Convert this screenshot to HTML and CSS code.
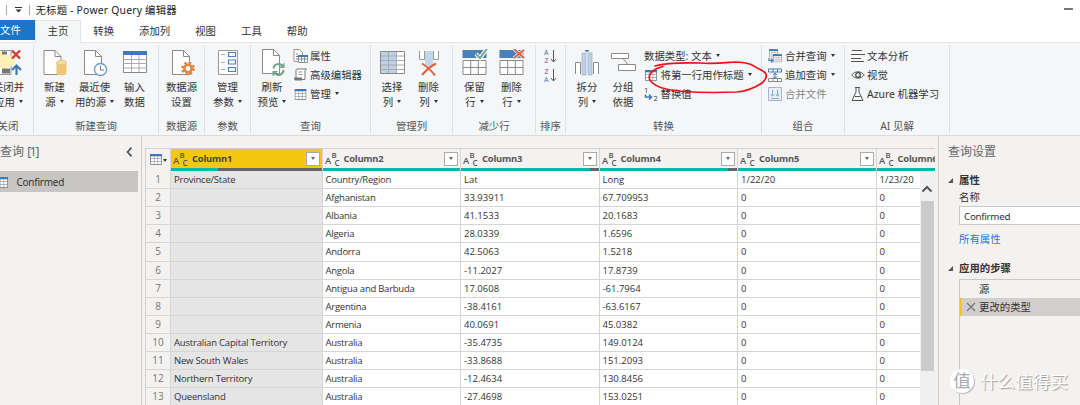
FILE: index.html
```html
<!DOCTYPE html>
<html lang="zh-CN">
<head>
    <meta charset="UTF-8">
    <meta name="viewport" content="width=device-width, initial-scale=1.0">
    <title>无标题 - Power Query 编辑器</title>
    <link rel="stylesheet" href="styles.css">
</head>
<body>
    <svg class="defs" width="0" height="0">
        <symbol id="abc" viewBox="0 0 16 16">
            <text x="0" y="12.6" font-size="9.4">A</text>
            <text x="6.4" y="7.4" font-size="7.8">B</text>
            <text x="9.4" y="15" font-size="8">C</text>
        </symbol>
        <symbol id="page" viewBox="0 0 24 28">
            <path d="M1.5 1.5h11l6 6v18h-17z" fill="#fff" stroke="#8a8a8a"/>
            <path d="M12.5 1.5v6h6" fill="none" stroke="#8a8a8a"/>
        </symbol>
        <symbol id="table" viewBox="0 0 12 12">
            <path d="M.5 1.5h11v10H.5z" fill="#fff" stroke="#777" stroke-width=".8"/>
            <path d="M.5 5.5h11M.5 8.5h11M4.2 3v8M7.8 3v8" stroke="#999" stroke-width=".7"/>
            <path d="M0 1h12v2.3H0z" fill="#3f79b5"/>
        </symbol>
        <symbol id="rows" viewBox="0 0 26 28">
            <path d="M.5 1h24v8H.5z" fill="#4a80b8"/>
            <path d="M1 11.5h23v14H1zM1 18.5h23M8.7 11.5v14M16.3 11.5v14" fill="#fff" stroke="#8a8a8a"/>
        </symbol>
    </svg>

    <div class="title-bar">
        <span class="bar"></span>
        <svg width="7" height="6"><path d="M0 .5h7" stroke="#333"/><path d="M.5 2.5h6l-3 3z" fill="#333"/></svg>
        <span class="bar"></span>
        <span class="title">无标题 - Power Query 编辑器</span>
        <span class="minimize"></span>
    </div>

    <div class="tabs">
        <div class="tab file">文件</div>
        <div class="tab active">主页</div>
        <div class="tab">转换</div>
        <div class="tab">添加列</div>
        <div class="tab">视图</div>
        <div class="tab">工具</div>
        <div class="tab">帮助</div>
    </div>

    <div class="ribbon">
        <div class="group g-close">
            <div class="tools">
                <div class="btn w51">
                    <svg width="28" height="28" viewBox="0 0 28 28">
                        <path d="M1 1.5h15v24H1z" fill="#fff" stroke="#999"/>
                        <path d="M3 2h7v17H3zM8 6l12 1v8l-10 5z" fill="#fff0b8"/>
                        <path d="M7 2.500h5v3H7zM7 19.500h8v5H7z" fill="#777"/>
                        <path d="M17 1.500l8 8M25 1.500l-8 8" stroke="#d13a32" stroke-width="2.400"/>
                        <path d="M21.500 26V17M17 21l4.500-4.500L26 21" fill="none" stroke="#3f79b5" stroke-width="2.200"/>
                    </svg>
                    <span>关闭并</span><span>应用<i class="caret"></i></span>
                </div>
            </div>
            <div class="caption">关闭</div>
        </div>

        <div class="group g-new">
            <div class="tools">
                <div class="btn w41">
                    <svg width="24" height="28" viewBox="0 0 24 28">
                        <use href="#page" x="-.5" width="24" height="28"/>
                        <path d="M13.500 14v10.500c0 1.300 2.200 2 5 2s5-.7 5-2V14z" fill="#edc77b"/>
                        <ellipse cx="18.500" cy="13.500" rx="5" ry="2" fill="#f6dfae" stroke="#e9bd65" stroke-width=".8"/>
                    </svg>
                    <span>新建</span><span>源<i class="caret"></i></span>
                </div>
                <div class="btn w39">
                    <svg width="24" height="28" viewBox="0 0 24 28">
                        <use href="#page" width="24" height="28"/>
                        <circle cx="17.500" cy="20.500" r="6" fill="#fff" stroke="#6f9bc8" stroke-width="1.300"/>
                        <path d="M17.500 16.500v4.500h3.500" fill="none" stroke="#5a7fa8"/>
                    </svg>
                    <span>最近使</span><span>用的源<i class="caret"></i></span>
                </div>
                <div class="btn w41">
                    <svg width="24" height="28" viewBox="0 0 24 28">
                        <path d="M.5 3.500h23v20H.5z" fill="#fff" stroke="#8a8a8a"/>
                        <path d="M0 10.500h24M0 14.500h24M0 19h24M8.500 6v17M16 6v17" stroke="#aaa"/>
                        <path d="M0 2h24v4H0z" fill="#3f79b5"/>
                    </svg>
                    <span>输入</span><span>数据</span>
                </div>
            </div>
            <div class="caption">新建查询</div>
        </div>

        <div class="group g-source">
            <div class="tools">
                <div class="btn w45">
                    <svg width="26" height="28" viewBox="0 0 26 28">
                        <use href="#page" width="24" height="28" x="2"/>
                        <circle cx="19" cy="19.500" r="5.600" fill="none" stroke="#e0843f" stroke-width="2.600" stroke-dasharray="2.400 1.998"/>
                        <circle cx="19" cy="19.500" r="3.700" fill="#fff" stroke="#e0843f" stroke-width="2.600"/>
                    </svg>
                    <span>数据源</span><span>设置</span>
                </div>
            </div>
            <div class="caption">数据源</div>
        </div>

        <div class="group g-param">
            <div class="tools">
                <div class="btn w45">
                    <svg width="22" height="28" viewBox="0 0 22 28">
                        <path d="M1.500 1.500h19v24h-19z" fill="#fff" stroke="#999"/>
                        <path d="M4 5.500h4M4 13.500h4M4 20.500h4" stroke="#aaa"/>
                        <path d="M11.500 3.500h7v4h-7zM11.500 11h7v4h-7zM11.500 18.500h7v4h-7z" fill="#fff" stroke="#4a80b8" stroke-width="1.200"/>
                    </svg>
                    <span>管理</span><span>参数<i class="caret"></i></span>
                </div>
            </div>
            <div class="caption">参数</div>
        </div>

        <div class="group g-query">
            <div class="tools">
                <div class="btn w42">
                    <svg width="26" height="28" viewBox="0 0 26 28">
                        <use href="#page" width="24" height="28" x="2" y="-1"/>
                        <path d="M14.500 19.500a5 5 0 0 1 9-2.500M24.500 21a5 5 0 0 1-9 3" fill="none" stroke="#71a58e" stroke-width="2"/>
                        <path d="M25.500 13.500v5.500H20zM13.500 27.500V22H19z" fill="#71a58e"/>
                    </svg>
                    <span>刷新</span><span>预览<i class="caret"></i></span>
                </div>
                <div class="list">
                    <div class="item">
                        <svg width="15" height="14" viewBox="0 0 15 14">
                            <path d="M1 .5h5.500l3 3v9H1z" fill="#fff" stroke="#999"/>
                            <path d="M3 5h2M3 7.500h2M3 10h2" stroke="#777"/>
                            <path d="M5.500 6.500h9v7h-9zM5.500 10h9M8.500 7v6M11.500 7v6" fill="#fff" stroke="#777" stroke-width=".8"/>
                            <path d="M5 6h10v2H5z" fill="#3f79b5"/>
                        </svg>属性
                    </div>
                    <div class="item">
                        <svg width="15" height="14" viewBox="0 0 15 14">
                            <path d="M4 1h9.500c-1 0-1.500.8-1.500 2v8.500H3V2.500C3 1.500 3.300 1 4 1z" fill="#fff" stroke="#777"/>
                            <path d="M5.500 4h4M5.500 6.500h4" stroke="#999"/>
                            <path d="M1 9.500h8v3H2.500C1.500 12.500 1 11.500 1 9.500z" fill="#777"/>
                        </svg>高级编辑器
                    </div>
                    <div class="item">
                        <svg width="15" height="12" viewBox="0 0 15 12"><use href="#table" x="1.500" width="12" height="12"/></svg>管理<i class="caret"></i>
                    </div>
                </div>
            </div>
            <div class="caption">查询</div>
        </div>

        <div class="group g-cols">
            <div class="tools">
                <div class="btn w42">
                    <svg width="25" height="28" viewBox="0 0 25 28">
                        <path d="M.5 2.500h24v22H.5z" fill="#fff"/>
                        <path d="M.5 2.500h16v22H.5z" fill="#bdd1e8"/>
                        <path d="M.5 7h24M.5 11.500h24M.5 16h24M.5 20.500h24M8.500 3v21M16.500 3v21" stroke="#aaa"/>
                        <path d="M.5 2.500h24v22H.5z" fill="none" stroke="#888"/>
                    </svg>
                    <span>选择</span><span>列<i class="caret"></i></span>
                </div>
                <div class="btn w31">
                    <svg width="22" height="28" viewBox="0 0 22 28">
                        <path d="M1.500 2v8.500h5V2M15.500 2v8.500h5V2" fill="#fff" stroke="#999"/>
                        <path d="M7 2h8v13l-4 3-4-3z" fill="#c3d5e9"/>
                        <path d="M4 14.500c5 3 9 6.500 13 12M18 14.500c-6 3-10 7-14 11.500" fill="none" stroke="#d9623f" stroke-width="2"/>
                    </svg>
                    <span>删除</span><span>列<i class="caret"></i></span>
                </div>
            </div>
            <div class="caption">管理列</div>
        </div>

        <div class="group g-rows">
            <div class="tools">
                <div class="btn w43">
                    <svg width="26" height="28" viewBox="0 0 26 28">
                        <use href="#rows" width="26" height="28"/>
                        <path d="M14 5l4 4 7-9" fill="none" stroke="#fff" stroke-width="4"/>
                        <path d="M14 5l4 4 7-9" fill="none" stroke="#71a58e" stroke-width="2"/>
                    </svg>
                    <span>保留</span><span>行<i class="caret"></i></span>
                </div>
                <div class="btn w31">
                    <svg width="26" height="28" viewBox="0 0 26 28">
                        <use href="#rows" width="26" height="28"/>
                        <path d="M15 0l10 9M25 1l-10 8" fill="none" stroke="#f5f7f9" stroke-width="3.500"/>
                        <path d="M15 0l10 9M25 1l-10 8" fill="none" stroke="#d9623f" stroke-width="1.900"/>
                    </svg>
                    <span>删除</span><span>行<i class="caret"></i></span>
                </div>
            </div>
            <div class="caption">减少行</div>
        </div>

        <div class="group g-sort">
            <div class="sorts">
                <svg width="13" height="15" viewBox="0 0 13 15">
                    <text class="blue" x="0" y="6">A</text><text class="purple" x=".4" y="13.500">Z</text>
                    <path d="M9.500 1v11.500M7 10l2.500 3 2.500-3" fill="none" stroke="#555"/>
                </svg>
                <svg width="13" height="15" viewBox="0 0 13 15">
                    <text class="purple" x=".4" y="6">Z</text><text class="blue" x="0" y="13.500">A</text>
                    <path d="M9.500 1v11.500M7 10l2.500 3 2.500-3" fill="none" stroke="#555"/>
                </svg>
            </div>
            <div class="caption">排序</div>
        </div>

        <div class="group g-transform">
            <div class="tools">
                <div class="btn w42">
                    <svg width="26" height="28" viewBox="0 0 26 28">
                        <path d="M1.500 25V13.500h5V25M19.500 25V13.500h5V25" fill="#fff" stroke="#8a8a8a"/>
                        <path d="M8 4h4v22H8zM14 4h4v22h-4z" fill="#bdd1e8" stroke="#9cadc0" stroke-width=".7"/>
                        <path d="M10.500 1h5L13 3.500z" fill="#3f79b5"/>
                    </svg>
                    <span>拆分</span><span>列<i class="caret"></i></span>
                </div>
                <div class="btn w30">
                    <svg width="25" height="28" viewBox="0 0 25 28">
                        <path d="M12 9.500l5 6" stroke="#888"/>
                        <path d="M.5 4.500h17v5H.5zM7.500 15.500h17v6h-17z" fill="#fff" stroke="#8a8a8a"/>
                    </svg>
                    <span>分组</span><span>依据</span>
                </div>
                <div class="list transform-list">
                    <div class="item">数据类型: 文本<i class="caret"></i></div>
                    <div class="item">
                        <svg width="14" height="12" viewBox="0 0 14 12"><use href="#table" x="1" width="12" height="12"/></svg>将第一行用作标题<i class="caret"></i>
                    </div>
                    <div class="item">
                        <svg width="14" height="14" viewBox="0 0 14 14">
                            <text class="num" x="0" y="6">1</text><text class="num" x="9.500" y="14">2</text>
                            <path d="M1.500 7.500v2.500h5M5 7.500L7.500 10 5 12.500" fill="none" stroke="#3f79b5" stroke-width="1.500"/>
                        </svg>替换值
                    </div>
                </div>
            </div>
            <div class="caption">转换</div>
        </div>

        <div class="group g-combine">
            <div class="list">
                <div class="item">
                    <svg width="15" height="14" viewBox="0 0 15 14">
                        <use href="#table" x="1" y="-.5" width="9" height="9"/>
                        <use href="#table" x="5" y="4.500" width="9" height="9"/>
                        <path d="M1 9v2.500h3M3 9.500l2 2-2 2" fill="none" stroke="#3f79b5" stroke-width="1.200"/>
                    </svg>合并查询<i class="caret"></i>
                </div>
                <div class="item">
                    <svg width="15" height="14" viewBox="0 0 15 14">
                        <path d="M.5 1h13v3H.5zM5 1v3M9.500 1v3" fill="#fff" stroke="#3f79b5"/>
                        <path d="M.5 10.500h13v3H.5zM5 10.500v3M9.500 10.500v3" fill="#fff" stroke="#888"/>
                        <path d="M7 5v5M5 7l2-2 2 2M5 8.500l2 2 2-2" fill="none" stroke="#3f79b5"/>
                    </svg>追加查询<i class="caret"></i>
                </div>
                <div class="item disabled">
                    <svg width="15" height="14" viewBox="0 0 15 14">
                        <path d="M.5.5h13v13H.5z" fill="#e8eff8" stroke="#a3b5cd"/>
                        <path d="M4.500 3v6M2.800 7.300l1.700 2 1.700-2M9.500 3v6M7.800 7.300l1.700 2 1.700-2M3 11.500h8" fill="none" stroke="#8fa8c8"/>
                    </svg>合并文件
                </div>
            </div>
            <div class="caption">组合</div>
        </div>

        <div class="group g-ai">
            <div class="list">
                <div class="item">
                    <svg width="14" height="14" viewBox="0 0 14 14"><path d="M1 1.500h10M0 5.500h14M0 9.500h10M0 12.500h13" stroke="#555"/></svg>文本分析
                </div>
                <div class="item">
                    <svg width="14" height="14" viewBox="0 0 14 14">
                        <path d="M.7 7C4 2.700 10 2.700 13.300 7 10 11.300 4 11.300.7 7z" fill="none" stroke="#555"/>
                        <circle cx="7" cy="7" r="2.300" fill="none" stroke="#444" stroke-width="1.300"/>
                    </svg>视觉
                </div>
                <div class="item">
                    <svg width="14" height="14" viewBox="0 0 14 14"><path d="M4 .5h5M5 .5V5L1 13.500h11L8 5V.5M3.500 9.500h6" fill="none" stroke="#555"/></svg>Azure 机器学习
                </div>
            </div>
            <div class="caption">AI 见解</div>
        </div>
    </div>

    <div class="workspace">
        <div class="queries">
            <div class="queries-head">
                <span>查询 <span class="count">[1]</span></span>
                <svg width="7" height="10" viewBox="0 0 7 10"><path d="M5.500.7L1.500 5l4 4.300" fill="none" stroke="#555" stroke-width="1.700"/></svg>
            </div>
            <div class="query">
                <svg width="12" height="12"><use href="#table" width="12" height="12"/></svg>
                <span>Confirmed</span>
            </div>
        </div>

        <div class="preview">
            <div class="grid">
                <div class="row head">
                    <div class="corner">
                        <svg width="12" height="12"><use href="#table" width="12" height="12"/></svg><i class="caret"></i>
                    </div>
                    <div class="col selected"><svg class="type"><use href="#abc"/></svg><b>Column1</b><span class="filter"><i class="caret"></i></span></div>
                    <div class="col"><svg class="type"><use href="#abc"/></svg><b>Column2</b><span class="filter"><i class="caret"></i></span></div>
                    <div class="col"><svg class="type"><use href="#abc"/></svg><b>Column3</b><span class="filter"><i class="caret"></i></span></div>
                    <div class="col"><svg class="type"><use href="#abc"/></svg><b>Column4</b><span class="filter"><i class="caret"></i></span></div>
                    <div class="col"><svg class="type"><use href="#abc"/></svg><b>Column5</b><span class="filter"><i class="caret"></i></span></div>
                    <div class="col"><svg class="type"><use href="#abc"/></svg><b>Column6</b></div>
                </div>
                <div class="row quality">
                    <div></div>
                    <div class="q"><span style="width: 69%"></span></div>
                    <div class="q"></div>
                    <div class="q"><span style="width: 6.500%"></span></div>
                    <div class="q"><span style="width: 6.500%"></span></div>
                    <div class="q"></div>
                    <div class="q"></div>
                </div>
                <div class="row"><div>1</div><div>Province/State</div><div>Country/Region</div><div>Lat</div><div>Long</div><div>1/22/20</div><div>1/23/20</div></div>
                <div class="row"><div>2</div><div></div><div>Afghanistan</div><div>33.93911</div><div>67.709953</div><div>0</div><div>0</div></div>
                <div class="row"><div>3</div><div></div><div>Albania</div><div>41.1533</div><div>20.1683</div><div>0</div><div>0</div></div>
                <div class="row"><div>4</div><div></div><div>Algeria</div><div>28.0339</div><div>1.6596</div><div>0</div><div>0</div></div>
                <div class="row"><div>5</div><div></div><div>Andorra</div><div>42.5063</div><div>1.5218</div><div>0</div><div>0</div></div>
                <div class="row"><div>6</div><div></div><div>Angola</div><div>-11.2027</div><div>17.8739</div><div>0</div><div>0</div></div>
                <div class="row"><div>7</div><div></div><div>Antigua and Barbuda</div><div>17.0608</div><div>-61.7964</div><div>0</div><div>0</div></div>
                <div class="row"><div>8</div><div></div><div>Argentina</div><div>-38.4161</div><div>-63.6167</div><div>0</div><div>0</div></div>
                <div class="row"><div>9</div><div></div><div>Armenia</div><div>40.0691</div><div>45.0382</div><div>0</div><div>0</div></div>
                <div class="row"><div>10</div><div>Australian Capital Territory</div><div>Australia</div><div>-35.4735</div><div>149.0124</div><div>0</div><div>0</div></div>
                <div class="row"><div>11</div><div>New South Wales</div><div>Australia</div><div>-33.8688</div><div>151.2093</div><div>0</div><div>0</div></div>
                <div class="row"><div>12</div><div>Northern Territory</div><div>Australia</div><div>-12.4634</div><div>130.8456</div><div>0</div><div>0</div></div>
                <div class="row"><div>13</div><div>Queensland</div><div>Australia</div><div>-27.4698</div><div>153.0251</div><div>0</div><div>0</div></div>
            </div>
            <div class="scrollbar">
                <svg width="12" height="8" viewBox="0 0 12 8"><path d="M1.500 6.500L6 2l4.500 4.500" fill="none" stroke="#555" stroke-width="2"/></svg>
                <div class="thumb"></div>
            </div>
        </div>

        <div class="settings">
            <div class="settings-title">查询设置</div>
            <div class="section"><i class="fold"></i>属性</div>
            <div class="label">名称</div>
            <div class="name-input">Confirmed</div>
            <div class="link">所有属性</div>
            <div class="section steps-title"><i class="fold"></i>应用的步骤</div>
            <div class="steps">
                <div class="step">源</div>
                <div class="step current">
                    <svg width="10" height="10" viewBox="0 0 10 10"><path d="M1 1l8 8M9 1L1 9" stroke="#777" stroke-width="1.300"/></svg>更改的类型
                </div>
            </div>
        </div>
    </div>

    <!-- 标注 -->
    <svg class="mark" width="126" height="38" viewBox="0 0 126 38">
        <path d="M19 6.500C9 9 4 14 5.500 19c3 7 14 11 34.500 12.500 20 1.500 40 1 53 .5 12-1 19-5 25-9 3.500-3 5-6 4-9-2-4-9-5-12-8-4-2.500-8-4-20-4-12 1-20 2-34 1-18-.5-33-.5-45 3" fill="none" stroke="#f00f18" stroke-width="1.700" stroke-linecap="round"/>
    </svg>

    <!-- 水印 -->
    <div class="watermark"><span class="logo">值</span><span>什么值得买</span></div>
</body>
</html>
```
FILE: styles.css
```css
* {
    margin: 0;
    padding: 0;
    box-sizing: border-box;
}

html, body {
    width: 100%;
    height: 100%;
    overflow: hidden;
}

body {
    position: relative;
    display: flex;
    flex-direction: column;
    background-color: #fff;
    color: #333;
    font-family: 'Noto Sans', 'Noto Sans CJK SC', sans-serif;
    font-size: 10.4px;
    line-height: 14px;
    white-space: nowrap;
}

svg {
    display: block;
    flex: none;
}

.defs {
    position: absolute;
}

.caret {
    display: inline-block;
    border: 2.5px solid transparent;
    border-top: 3px solid #333;
    border-bottom: 0;
    margin-left: 4px;
    vertical-align: 3px;
    flex: none;
}

/* 标题栏 */
.title-bar {
    display: flex;
    align-items: center;
    height: 20px;
    flex: none;
    padding: 0 7px 0 6px;
    color: #222;
}

.bar {
    width: 1px;
    height: 10px;
    background-color: #aaa;
    margin-right: 7.500px;
}

.title-bar svg + .bar {
    margin: 0 6px 0 7px;
}

.title {
    letter-spacing: 0.2px;
}

.minimize {
    width: 9px;
    height: 2px;
    margin-left: auto;
    margin-top: -2px;
    background-color: #777;
}

.tabs {
    display: flex;
    height: 22px;
    flex: none;
}

.tab {
    padding: 0 12.500px;
    line-height: 22px;
}

.tab.file {
    width: 35px;
    height: 20px;
    padding: 0;
    line-height: 21px;
    color: #fff;
    background-color: #1976c9;
}

.tab.active {
    height: 23px;
    padding: 0 11.500px;
    border: 1px solid #e1e3e5;
    border-bottom: 0;
    background-color: #f4f6f8;
    line-height: 21px;
    z-index: 1;
}

/* 功能区 */
.ribbon {
    display: flex;
    height: 94px;
    flex: none;
    padding: 2px 0;
    background-color: #f4f6f8;
    border-top: 1px solid #e1e3e5;
    border-bottom: 1px solid #d9dde1;
}

.group {
    display: flex;
    flex-direction: column;
    justify-content: space-between;
    flex: none;
    height: 89px;
    padding-top: 4px;
    border-right: 1px solid #dfe2e5;
}

.g-close { width: 51px; margin-left: -17px; }
.g-new { width: 125px; }
.g-source { width: 46px; }
.g-param { width: 46px; }
.g-query { width: 120px; }
.g-cols { width: 82px; }
.g-rows { width: 83px; }
.g-sort { width: 30px; }
.g-transform { width: 196px; }
.g-combine { width: 83px; }
.g-ai { width: 105px; }

.tools {
    display: flex;
}

.btn {
    display: flex;
    flex-direction: column;
    align-items: center;
    flex: none;
    line-height: 14.500px;
}

.btn svg {
    margin-bottom: 3px;
}

.w30 { width: 30px; }
.w31 { width: 31px; }
.w39 { width: 39px; }
.w41 { width: 41px; }
.w42 { width: 42px; }
.w43 { width: 43px; }
.w45 { width: 45px; }
.w51 { width: 51px; }

.caption {
    text-align: center;
    color: #555;
    line-height: 15px;
}

.item {
    display: flex;
    align-items: center;
    height: 19px;
    margin-top: -3px;
    margin-bottom: 3px;
}

.item svg {
    margin-right: 2px;
}

.transform-list {
    padding-left: 6px;
}

.transform-list .item svg {
    margin-right: 2.500px;
}

.g-combine .list,
.g-ai .list {
    padding-left: 6px;
}

.disabled {
    color: #888;
}

.sorts {
    display: flex;
    flex-direction: column;
    align-items: center;
    gap: 4px;
}

.sorts text {
    font-size: 7px;
}

.blue { fill: #3f79b5; }
.purple { fill: #8b4fa5; }

.num {
    font-size: 7.500px;
    fill: #444;
}

/* 工作区 */
.workspace {
    display: flex;
    flex: 1;
    min-height: 0;
    background-color: #f3f2f1;
}

.queries {
    width: 142px;
    flex: none;
    border-right: 1px solid #cfcfcf;
}

.queries-head {
    display: flex;
    align-items: center;
    justify-content: space-between;
    height: 35px;
    padding: 0 8px 3px 0;
    font-size: 12px;
    color: #666;
}

.count {
    letter-spacing: -1.200px;
}

.query {
    display: flex;
    align-items: center;
    gap: 8.500px;
    width: 138px;
    height: 21px;
    background-color: #c8c6c4;
    font-size: 10px;
    letter-spacing: -0.250px;
}

.query svg {
    margin-left: -4px;
}

.preview {
    position: relative;
    width: 796px;
    flex: none;
    padding: 12px 3px 0;
    overflow: hidden;
}

.grid {
    width: 790px;
    overflow: hidden;
    border-left: 1px solid #d0d0d0;
    border-top: 1px solid #d0d0d0;
}

.row {
    display: grid;
    grid-template-columns: 25px 151.500px 138.500px 138.500px 138.500px 138.500px 138px;
    grid-auto-rows: 100%;
    height: 18.120px;
    font-family: 'Open Sans', 'Noto Sans CJK SC', sans-serif;
    font-size: 9.500px;
    line-height: 17.500px;
}

.row > div {
    padding-left: 3px;
    background-color: #fff;
    border-right: 1px solid #d6d6d6;
    border-bottom: 1px solid #d6d6d6;
}

.row > div:first-child {
    padding-left: 0;
    text-align: center;
    font-size: 10px;
    color: #777;
    background-color: #f3f2f1;
}

.row > div:nth-child(2) {
    background-color: #e5e5e5;
    letter-spacing: -0.200px;
}

.row > div:nth-child(3) {
    letter-spacing: -0.250px;
}

.row.head {
    height: 19px;
    font-size: 9.400px;
    letter-spacing: -0.200px;
}

.row.head > div {
    display: flex;
    align-items: center;
    padding: 0 2px 0 2px;
    background-color: #f3f2f1;
    border-bottom: 0;
    color: #555;
}

.row.head > .corner {
    padding-left: 4px;
}

.corner .caret {
    margin: 4px 0 0 1px;
}

.row.head > .selected {
    background-color: #f2c811;
    color: #444;
}

.type {
    width: 16px;
    height: 16px;
    margin-right: 3px;
    font-weight: 600;
    letter-spacing: 0;
    fill: #555;
}

.filter {
    display: flex;
    align-items: center;
    justify-content: center;
    width: 14px;
    height: 14px;
    margin-left: auto;
    background-color: #fff;
    border: 1px solid #aaa;
}

.filter .caret {
    margin: 0;
    border-top-color: #666;
}

.row.quality {
    height: 3px;
}

.row.quality > div {
    border-bottom: 0;
}

.row.quality > .q {
    display: flex;
    justify-content: flex-end;
    padding: 0;
    background-color: #01b8aa;
}

.q span {
    background-color: #666;
}

.scrollbar {
    position: absolute;
    top: 35px;
    right: 3px;
    bottom: 0;
    width: 15px;
    padding: 14px 1px 0;
    background-color: #f0f0f0;
}

.thumb {
    width: 13px;
    height: 170px;
    margin-top: 8px;
    background-color: #cbcbcb;
}

.settings {
    flex: 1;
    display: flex;
    flex-direction: column;
    padding: 7px 0 0 20px;
    border-left: 1px solid #cfcfcf;
}

.settings-title {
    margin-left: -11px;
    line-height: 17px;
    font-size: 12px;
    color: #666;
}

.section {
    display: flex;
    align-items: center;
    height: 18px;
    margin: 11px 0 0 -11px;
    font-weight: bold;
}

.fold {
    border-left: 5px solid transparent;
    border-bottom: 5px solid #555;
    margin-right: 6px;
}

.label {
    line-height: 17px;
}

.name-input {
    height: 19px;
    padding-left: 4px;
    background-color: #fff;
    border: 1px solid #c8c8c8;
    border-right: 0;
    font-size: 9.800px;
    letter-spacing: -0.300px;
    line-height: 19px;
}

.link {
    margin-top: 5px;
    line-height: 18px;
    color: #1e7ad1;
}

.steps-title {
    margin-top: 11px;
}

.steps {
    flex: 1;
    margin-top: 2px;
    border: 1px solid #c8c8c8;
    border-right: 0;
    border-bottom: 0;
}

.step {
    height: 18px;
    padding-left: 19px;
    line-height: 18px;
}

.step.current {
    display: flex;
    align-items: center;
    gap: 3px;
    padding-left: 4px;
    background-color: #d0cfce;
    border-left: 2px solid #f2c811;
}

.mark {
    position: absolute;
    left: 644px;
    top: 60px;
}

.watermark {
    position: absolute;
    left: 950px;
    top: 369px;
    display: flex;
    align-items: center;
    gap: 6px;
    height: 24px;
    font-size: 17.600px;
    color: #fff;
    text-shadow: 1px 1px 1px #999;
}

.logo {
    width: 24px;
    height: 24px;
    border-radius: 50%;
    background-color: #fff;
    color: #aaa;
    line-height: 23px;
    text-align: center;
    text-shadow: none;
    box-shadow: 1px 1px 1px #bbb;
}
```
